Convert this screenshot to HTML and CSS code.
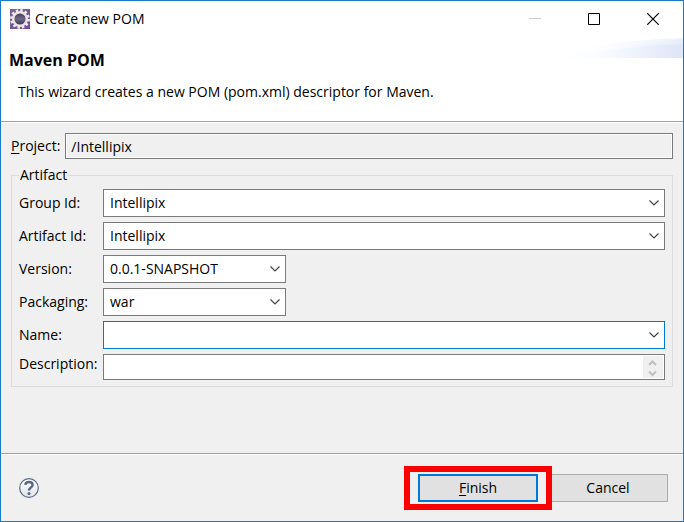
FILE: index.html
```html
<!DOCTYPE html>
<html lang="en">
<head>
<meta charset="utf-8">
<title>Create new POM</title>
<link rel="stylesheet" href="styles.css">
</head>
<body>
<main class="window">
  <header class="titlebar">
    <svg class="app-icon" viewBox="0 0 20 20" aria-hidden="true">
      <defs>
        <linearGradient id="tile" x1="0" y1="0" x2="1" y2="1"><stop offset="0" stop-color="#75698a"/><stop offset="1" stop-color="#7048a3"/></linearGradient>
        <linearGradient id="hole" x1="0" y1="0" x2="0" y2="1"><stop offset="0" stop-color="#3c3650"/><stop offset=".5" stop-color="#6c6788"/><stop offset="1" stop-color="#37304e"/></linearGradient>
      </defs>
      <rect width="20" height="20" fill="url(#tile)"/>
      <circle cx="10" cy="10" r="8.6" fill="none" stroke="#efecec" stroke-width="2.6" stroke-dasharray="2.5 2.003"/>
      <circle cx="10" cy="10" r="6.8" fill="url(#hole)" stroke="#e9e6e6" stroke-width="2.4"/>
    </svg>
    <span class="caption">Create new POM</span>
    <div class="window-buttons">
      <button class="window-button" type="button" aria-label="Minimize" disabled><svg viewBox="0 0 12 12"><path d="M0 5.5H12" stroke="#ccc"/></svg></button>
      <button class="window-button" type="button" aria-label="Maximize"><svg viewBox="0 0 12 12"><path d="M.5 .5H11.5V11.5H.5Z" stroke="#000"/></svg></button>
      <button class="window-button" type="button" aria-label="Close"><svg viewBox="0 0 12 12"><path d="M.3 .3L11.7 11.7M11.7 .3L.3 11.7" stroke="#000" stroke-width="1.2"/></svg></button>
    </div>
  </header>

  <section class="banner">
    <svg class="swoosh" viewBox="0 0 140 20" aria-hidden="true">
      <defs><linearGradient id="sky" gradientUnits="userSpaceOnUse" x1="0" y1="0" x2="140" y2="0"><stop offset="0" stop-color="#fff"/><stop offset=".35" stop-color="#fcfdff"/><stop offset=".65" stop-color="#eff3fc"/><stop offset="1" stop-color="#dde5f7"/></linearGradient></defs>
      <path d="M0 20Q60 2 140 0V20Z" fill="url(#sky)" opacity=".5"/>
      <path d="M45 20Q82 6 140 1V20Z" fill="url(#sky)" opacity=".4"/>
      <path d="M20 20Q82 7 140 6V20Z" fill="url(#sky)"/>
    </svg>
    <h1>Maven POM</h1>
    <p>This wizard creates a new POM (pom.xml) descriptor for Maven.</p>
  </section>

  <form class="content">
    <div class="project">
      <label for="project"><span class="mnemonic">P</span>roject:</label>
      <input id="project" class="field" type="text" value="/Intellipix" readonly>
    </div>
    <fieldset class="artifact">
      <legend>Artifact</legend>
      <label for="group">Group Id:</label>
      <select id="group" class="combo"><option>Intellipix</option></select>
      <label for="artifact">Artifact Id:</label>
      <select id="artifact" class="combo"><option>Intellipix</option></select>
      <label for="version">Version:</label>
      <select id="version" class="combo short"><option>0.0.1-SNAPSHOT</option></select>
      <label for="packaging">Packaging:</label>
      <select id="packaging" class="combo short"><option>war</option></select>
      <label for="name">Name:</label>
      <select id="name" class="combo active"><option></option></select>
      <label class="description-label" for="description">Description:</label>
      <div class="description">
        <textarea id="description" rows="1"></textarea>
        <svg class="scroller" viewBox="0 0 20 22" aria-hidden="true"><path d="M6 9L9.500 5.500L13 9M6 15.500L9.500 19L13 15.500"/></svg>
      </div>
    </fieldset>
  </form>

  <footer class="actions">
    <button class="help" type="button" aria-label="Help">
      <svg viewBox="0 0 20 20">
        <defs><linearGradient id="glass" x1="0" y1="0" x2="0" y2="1"><stop offset="0" stop-color="#fff"/><stop offset="1" stop-color="#e2e3e6"/></linearGradient></defs>
        <circle cx="10" cy="10" r="9.3" fill="url(#glass)" stroke="#5c6d8d" stroke-width="1.2"/>
        <path d="M6.3 6.8C6.600 3 13.600 3 13.600 6.900C13.600 9.300 10 9.500 10 12.600" fill="none" stroke="#566789" stroke-width="2.4"/>
        <circle cx="10" cy="15.500" r="1.500" fill="#566789"/>
      </svg>
    </button>
    <button class="push finish" type="submit"><span class="mnemonic">F</span>inish</button>
    <button class="push" type="button">Cancel</button>
  </footer>
</main>
</body>
</html>
```
FILE: styles.css
```css
* {
  box-sizing: border-box;
}

body {
  margin: 0;
  font: 14px/20px "Open Sans", "Noto Sans", sans-serif;
  color: #000;
}

button,
input,
select,
textarea {
  font: inherit;
  color: inherit;
  border-radius: 0;
}

.window {
  display: flex;
  flex-direction: column;
  min-height: 100vh;
  border: 1px solid #1979ca;
  background: #f0f0f0;
}

.titlebar {
  display: flex;
  align-items: center;
  height: 36px;
  padding: 0 1px 0 9px;
  background: #fff;
}

.app-icon {
  width: 20px;
  height: 20px;
}

.caption {
  margin-left: 5px;
}

.window-buttons {
  display: flex;
  margin-left: auto;
}

.window-button {
  display: grid;
  place-items: center;
  width: 59px;
  height: 36px;
  padding: 0;
  border: 0;
  background: none;
}

.window-button svg {
  width: 12px;
  height: 12px;
  fill: none;
}

.banner {
  position: relative;
  height: 85px;
  padding: 13px 8px 0;
  border-bottom: 1px solid #a0a0a0;
  background: #fff;
}

.swoosh {
  position: absolute;
  top: 1px;
  right: 0;
  width: 140px;
  height: 20px;
}

h1 {
  margin: 0;
  font-size: 16px;
  line-height: 20px;
}

.banner p {
  margin: 12px 9px 0;
}

.content {
  flex: 1;
  padding: 10px 10px 0;
  border-top: 1px solid #fff;
}

.project {
  display: flex;
  align-items: center;
  gap: 5px;
}

.mnemonic {
  text-decoration: underline;
  text-underline-offset: 2px;
}

.field {
  flex: 1;
  min-width: 0;
  height: 26px;
  padding: 0 5px;
  border: 1px solid #7a7a7a;
  background: #f0f0f0;
  box-shadow: inset 0 0 0 1px #fff;
  outline: 0;
}

.artifact {
  display: grid;
  grid-template-columns: 80px minmax(0, 1fr);
  align-items: center;
  gap: 5px 4px;
  min-width: 0;
  margin: 6px 0 0;
  padding: 4px 7px 6px;
  border: 1px solid #dcdcdc;
}

legend {
  padding: 0 1px;
}

.artifact label {
  white-space: nowrap;
}

.combo {
  width: 100%;
  height: 28px;
  padding: 0 28px 0 6px;
  border: 1px solid #7a7a7a;
  outline: 0;
  appearance: none;
  background: #fff url("data:image/svg+xml,%3Csvg xmlns='http://www.w3.org/2000/svg' width='10' height='6'%3E%3Cpath d='M.5 .5L5 5L9.5 .5' fill='none' stroke='%23444' stroke-width='1.2'/%3E%3C/svg%3E") no-repeat right 5px center;
}

.combo.short {
  width: 183px;
}

.combo.active {
  border-color: #0078d7;
}

.description-label {
  align-self: start;
}

.description {
  display: flex;
  height: 26px;
  padding: 1px;
  border: 1px solid #7a7a7a;
  background: #fff;
}

.description textarea {
  flex: 1;
  min-width: 0;
  height: 22px;
  padding: 0 5px;
  border: 0;
  outline: 0;
  resize: none;
  overflow: hidden;
  background: none;
}

.scroller {
  width: 20px;
  height: 22px;
  background: #f0f0f0;
  fill: none;
  stroke: #bfbfbf;
  stroke-width: 2;
}

.actions {
  display: flex;
  align-items: center;
  gap: 10px;
  height: 68px;
  padding: 0 15px 0 18px;
  border-top: 1px solid #a0a0a0;
  box-shadow: inset 0 1px #fff;
}

.help {
  width: 20px;
  height: 20px;
  margin-right: auto;
  padding: 0;
  border: 0;
  background: none;
}

.help svg {
  display: block;
}

.push {
  width: 120px;
  height: 28px;
  padding: 0;
  border: 1px solid #adadad;
  background: #e1e1e1;
}

.finish {
  position: relative;
  border: 2px solid #0078d7;
}

.finish::after {
  content: "";
  position: absolute;
  inset: -10px -16px;
  border: 6px solid #f00;
  pointer-events: none;
}
```
